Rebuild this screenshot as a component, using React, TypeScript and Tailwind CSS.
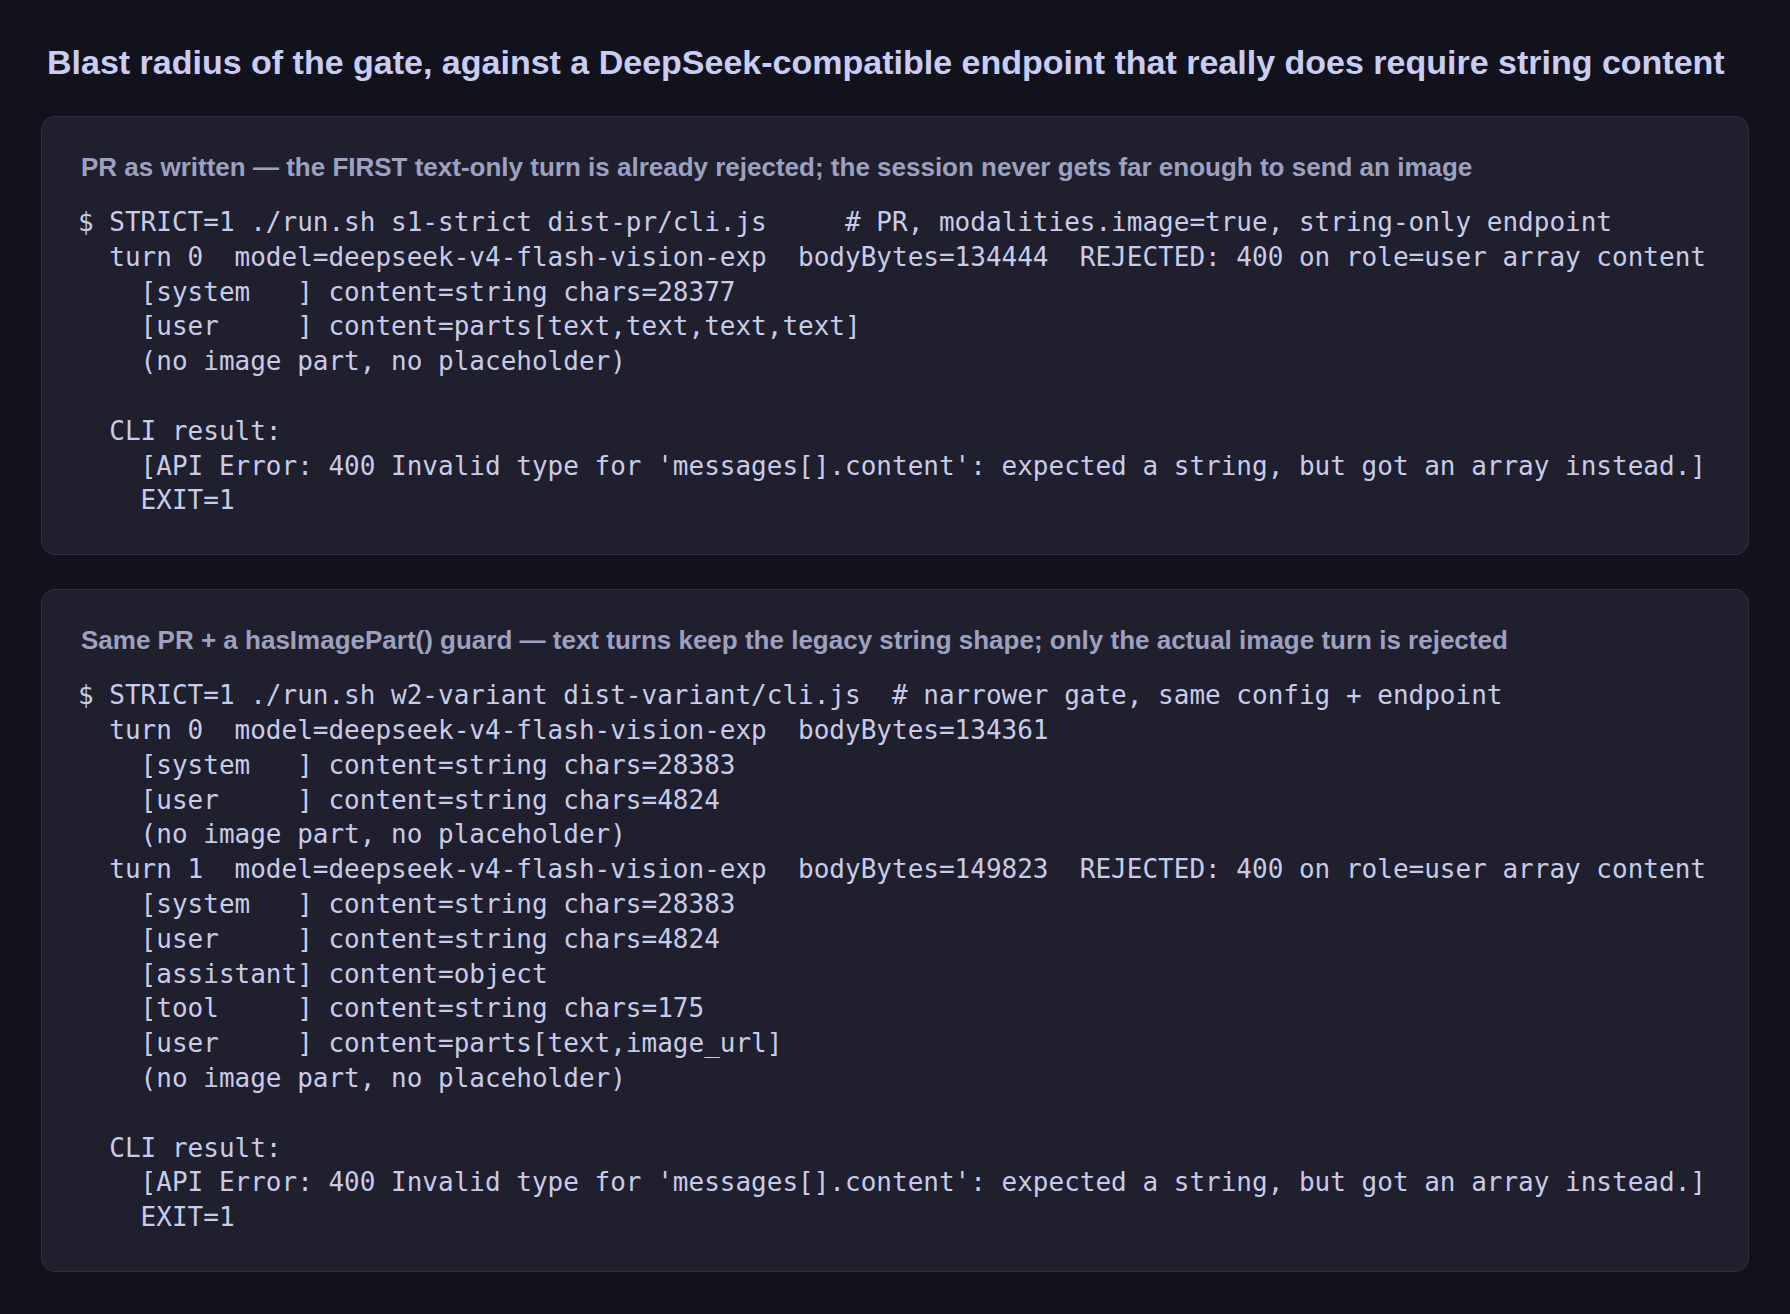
import React from "react";

const card1 = `$ STRICT=1 ./run.sh s1-strict dist-pr/cli.js     # PR, modalities.image=true, string-only endpoint
  turn 0  model=deepseek-v4-flash-vision-exp  bodyBytes=134444  REJECTED: 400 on role=user array content
    [system   ] content=string chars=28377
    [user     ] content=parts[text,text,text,text]
    (no image part, no placeholder)

  CLI result:
    [API Error: 400 Invalid type for 'messages[].content': expected a string, but got an array instead.]
    EXIT=1`;

const card2 = `$ STRICT=1 ./run.sh w2-variant dist-variant/cli.js  # narrower gate, same config + endpoint
  turn 0  model=deepseek-v4-flash-vision-exp  bodyBytes=134361
    [system   ] content=string chars=28383
    [user     ] content=string chars=4824
    (no image part, no placeholder)
  turn 1  model=deepseek-v4-flash-vision-exp  bodyBytes=149823  REJECTED: 400 on role=user array content
    [system   ] content=string chars=28383
    [user     ] content=string chars=4824
    [assistant] content=object
    [tool     ] content=string chars=175
    [user     ] content=parts[text,image_url]
    (no image part, no placeholder)

  CLI result:
    [API Error: 400 Invalid type for 'messages[].content': expected a string, but got an array instead.]
    EXIT=1`;

function Card({ heading, body }: { heading: string; body: string }) {
  return (
    <section className="rounded-[14px] border border-[#2f3042] bg-[#1f1f2e] px-[36px] py-[36px]">
      <h2
        className="pl-[3px] text-[26px] leading-[28px] font-bold text-[#9da1bf]"
        style={{ fontFamily: '"Liberation Sans", Arial, sans-serif' }}
      >
        {heading}
      </h2>
      <pre
        className="mt-[24px] text-[26px] leading-[34.8px] text-[#c8cce9] whitespace-pre"
        style={{ fontFamily: '"DejaVu Sans Mono", monospace' }}
      >
        {body}
      </pre>
    </section>
  );
}

export default function App() {
  return (
    <div className="min-h-screen bg-[#12121c] px-[41px] pt-[42px] pb-[41px]">
      <h1
        className="pl-[6px] text-[34px] leading-[40px] font-bold text-[#c9cdf3]"
        style={{ fontFamily: '"Liberation Sans", Arial, sans-serif' }}
      >
        Blast radius of the gate, against a DeepSeek-compatible endpoint that really does require string content
      </h1>
      <div className="mt-[34px] flex flex-col gap-[34px]">
        <Card
          heading="PR as written — the FIRST text-only turn is already rejected; the session never gets far enough to send an image"
          body={card1}
        />
        <Card
          heading="Same PR + a hasImagePart() guard — text turns keep the legacy string shape; only the actual image turn is rejected"
          body={card2}
        />
      </div>
    </div>
  );
}
